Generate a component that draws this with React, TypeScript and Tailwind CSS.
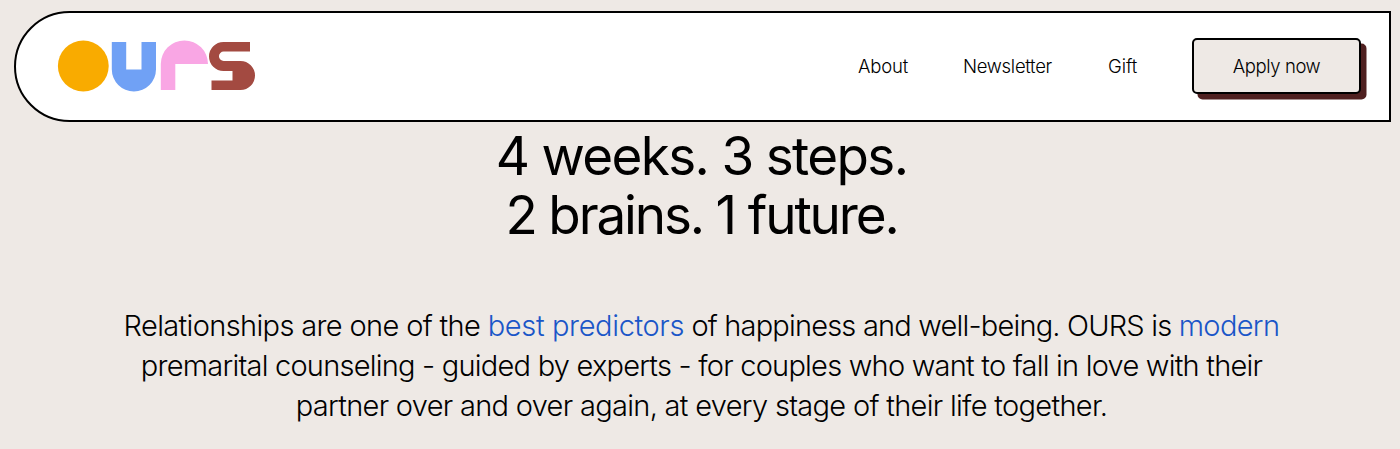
import clsx from "clsx";

const navLinks = [
  { label: "About", className: "w-[50px] mr-[55px] tracking-[-0.15px]" },
  { label: "Newsletter", className: "w-[89px] mr-[56px] tracking-[-0.3px]" },
  { label: "Gift", className: "w-[30px] mr-[54px] tracking-[-0.1px]" },
];

function Logo() {
  return (
    <svg
      width="199"
      height="52"
      viewBox="57 40 199 52"
      className="mb-[2px]"
      aria-label="OURS"
    >
      <circle cx="83.3" cy="66" r="25.4" fill="#f9ab00" />
      <path
        d="M111.8 42H126.2V69.5H141.5V42H156V69.3A22.1 22.1 0 0 1 111.8 69.3Z"
        fill="#70a1f5"
      />
      <path
        d="M160.8 90V64A23.6 23.6 0 0 1 208 64H175.3V90Z"
        fill="#f9a6e4"
      />
      <path
        d="M250 42H223.5A14.5 14.5 0 0 0 223.5 71H232.5V80.5H211.5V90H240.5A14.5 14.5 0 0 0 240.5 61H223.7A4.7 4.7 0 0 1 223.7 51.5H250Z"
        fill="#a34a41"
      />
    </svg>
  );
}

function Header() {
  return (
    <header className="ml-[14px] mr-[9px] flex h-[111px] items-center rounded-l-full border-2 border-black bg-white pl-[41px] pr-[28px] text-[18.5px] font-light">
      <Logo />
      <nav className="ml-auto flex items-center">
        {navLinks.map((link) => (
          <a
            key={link.label}
            href="#"
            className={clsx("whitespace-nowrap", link.className)}
          >
            {link.label}
          </a>
        ))}
        <button className="mb-[2px] h-14 w-[169px] rounded-[5px] border-2 border-black bg-[#eee9e5] pt-[2px] tracking-[-0.4px] shadow-[5.5px_5.5px_0_0_#4f2020]">
          Apply now
        </button>
      </nav>
    </header>
  );
}

export default function App() {
  return (
    <div className="h-[449px] overflow-hidden bg-[#eee9e5] pt-[11px] font-['Inter',sans-serif] text-black">
      <Header />
      <main className="flex flex-col items-center text-center">
        <h1 className="mt-[5px] flex flex-col items-center whitespace-nowrap pl-[3px] text-[53px] font-normal leading-[59px]">
          <span className="tracking-[-1.65px]">4 weeks. 3 steps.</span>
          <span className="tracking-[-2.15px]">2 brains. 1 future.</span>
        </h1>
        <p className="mt-[61px] flex flex-col items-center whitespace-nowrap pl-[3px] text-[29px] font-light leading-[40px]">
          <span className="tracking-[-0.64px]">
            Relationships are one of the{" "}
            <a href="#" className="tracking-[-0.36px] text-[#1a56c8]">
              best predictors
            </a>
            <span className="tracking-[-0.81px]">
              {" "}
              of happiness and well-being. OURS is{" "}
            </span>
            <a href="#" className="text-[#1a56c8]">
              modern
            </a>
          </span>
          <span className="tracking-[-0.77px]">
            premarital counseling - guided by experts - for couples who want to
            fall in love with their
          </span>
          <span className="tracking-[-0.69px]">
            partner over and over again, at every stage of their life together.
          </span>
        </p>
      </main>
    </div>
  );
}
